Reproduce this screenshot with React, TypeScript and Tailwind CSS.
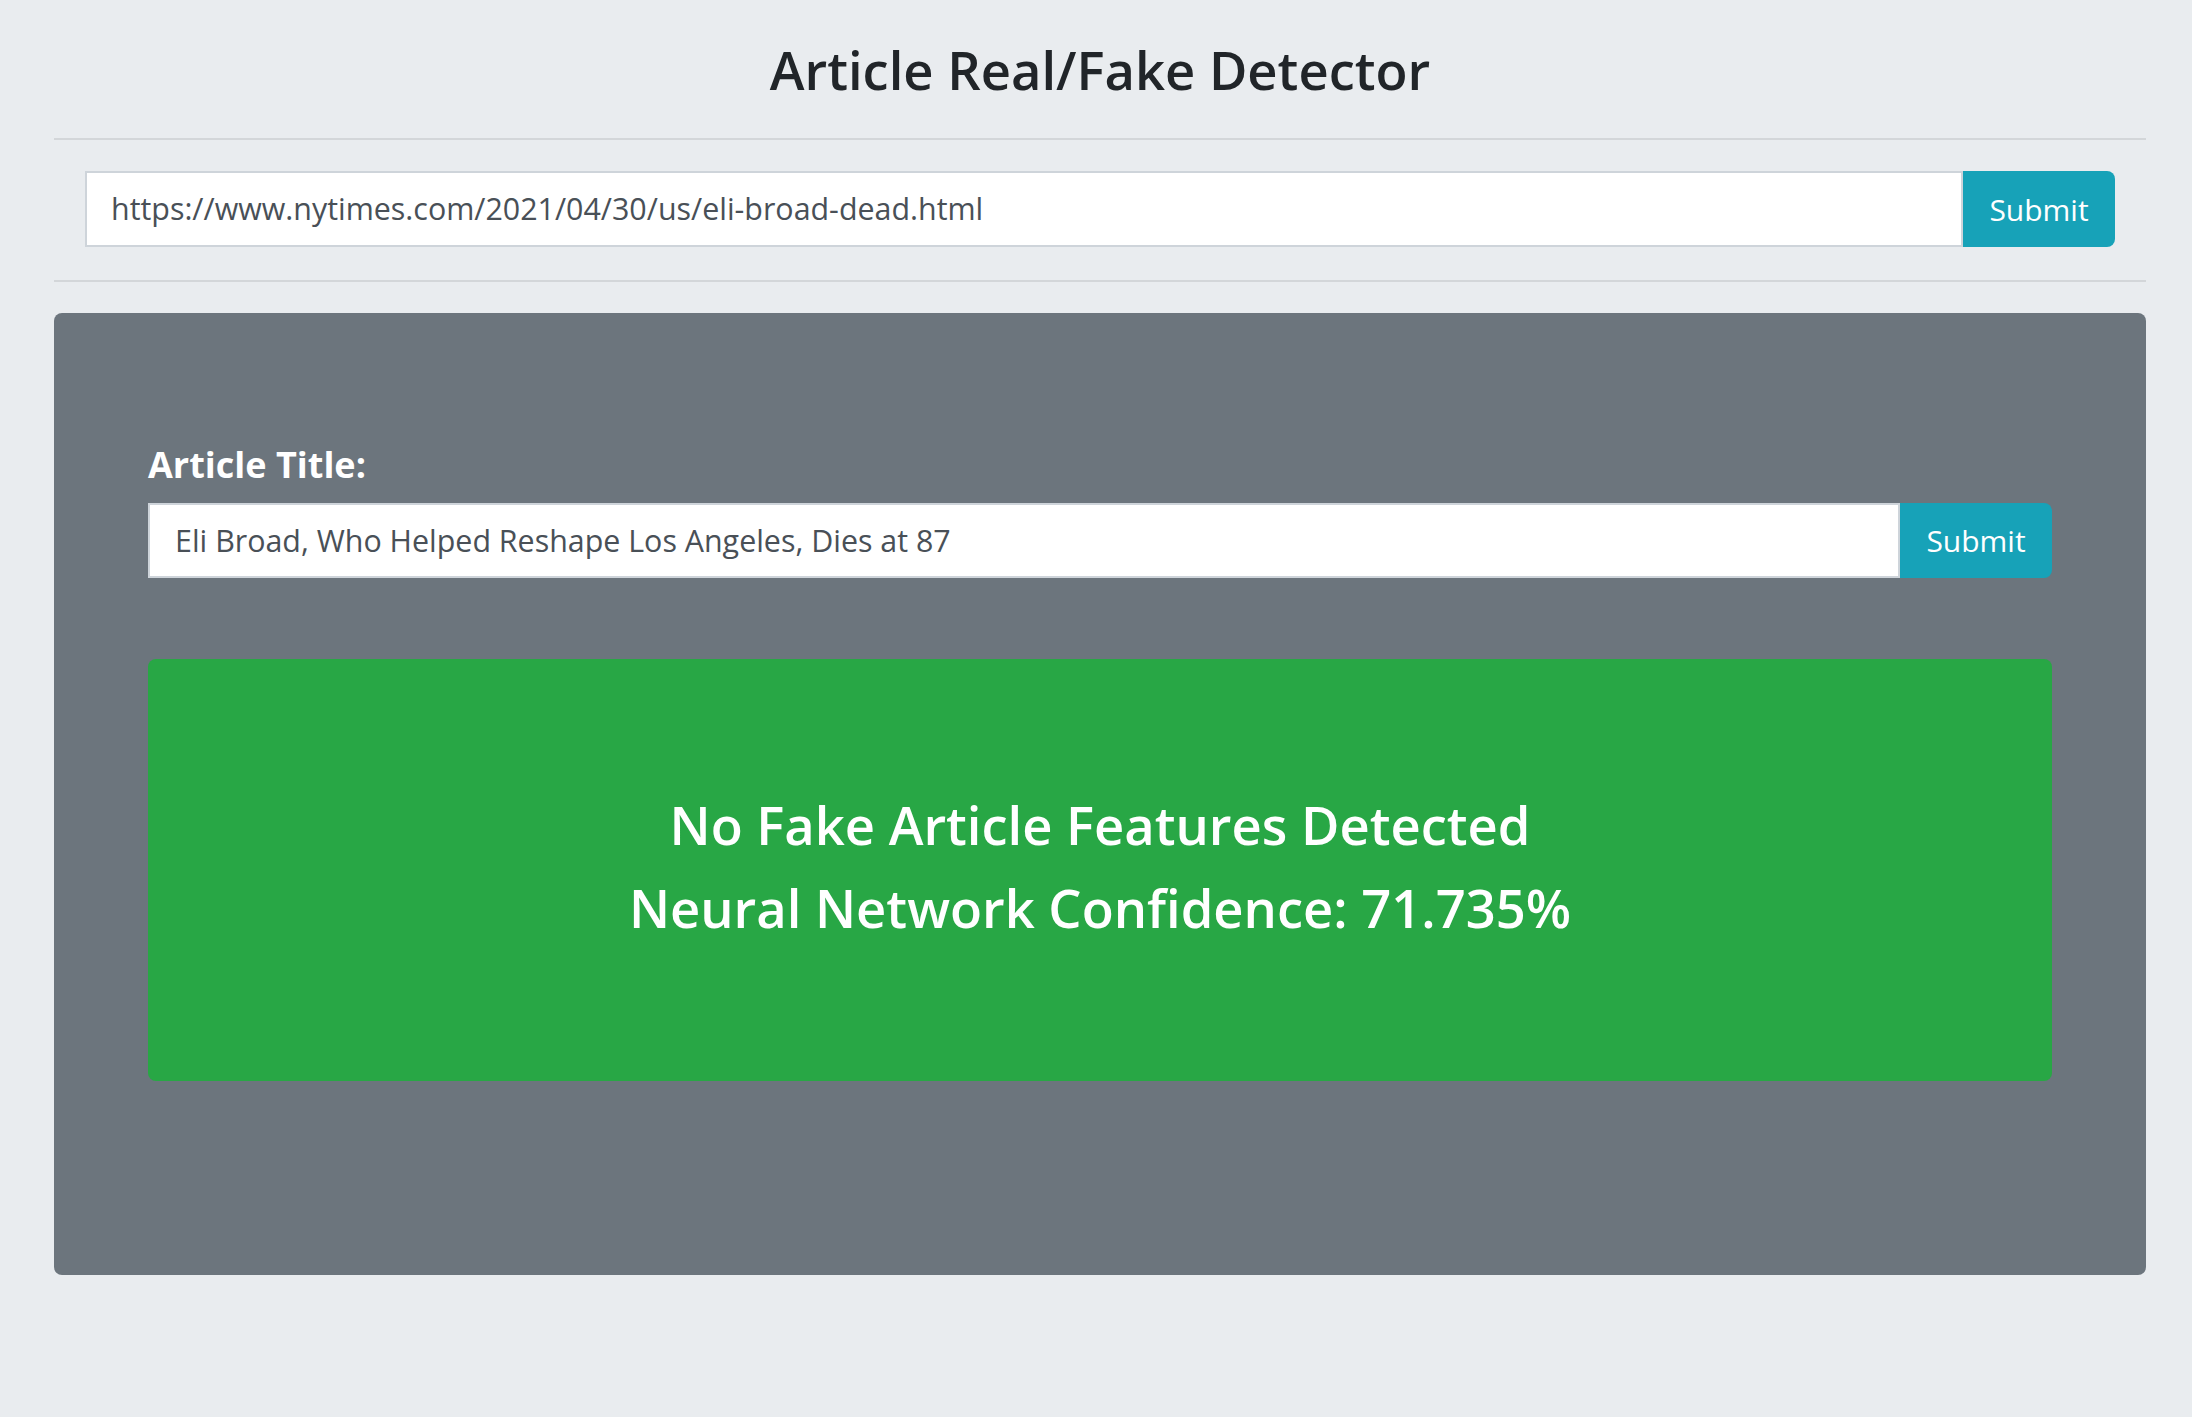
function App() {
	return (
		<div className="min-h-screen w-full bg-[#e9ecef] pl-[54px] pr-[46px] font-['Open_Sans',sans-serif]">
			<div className="flex justify-center pt-[30px] pb-[28px]">
				<h1 className="text-[52.5px] leading-[80px] font-semibold text-[#212529]">Article Real/Fake Detector</h1>
			</div>
			<hr className="border-t-2 border-[#d3d6d9]" />
			<div className="px-[31px] pt-[31px] pb-[33px]">
				<div className="flex h-[76px]">
					<input
						type="text"
						readOnly
						value="https://www.nytimes.com/2021/04/30/us/eli-broad-dead.html"
						className="flex-1 bg-white border-2 border-[#ced4da] px-[24px] text-[30.4px] text-[#495057] outline-none"
					/>
					<button className="w-[152px] bg-[#17a2b8] text-white text-[30px] rounded-r-[8px]">Submit</button>
				</div>
			</div>
			<hr className="border-t-2 border-[#d3d6d9]" />
			<div className="mt-[31px] h-[962px] rounded-[8px] bg-[#6c757d] px-[94px] pt-[126px]">
				<label className="block text-[36px] leading-[52px] font-bold text-white">Article Title:</label>
				<div className="mt-[12px] flex h-[75px]">
					<input
						type="text"
						readOnly
						value="Eli Broad, Who Helped Reshape Los Angeles, Dies at 87"
						className="flex-1 bg-white border-2 border-[#ced4da] px-[25px] text-[30.4px] text-[#495057] outline-none"
					/>
					<button className="w-[152px] bg-[#17a2b8] text-white text-[30px] rounded-r-[8px]">Submit</button>
				</div>
				<div className="mt-[81px] flex h-[422px] flex-col items-center justify-center rounded-[8px] bg-[#28a745] pb-[8px] text-white">
					<p className="text-[52.5px] leading-[83px] font-semibold">No Fake Article Features Detected</p>
					<p className="text-[52.5px] leading-[83px] font-semibold">Neural Network Confidence: 71.735%</p>
				</div>
			</div>
		</div>
	)
}

export default App
